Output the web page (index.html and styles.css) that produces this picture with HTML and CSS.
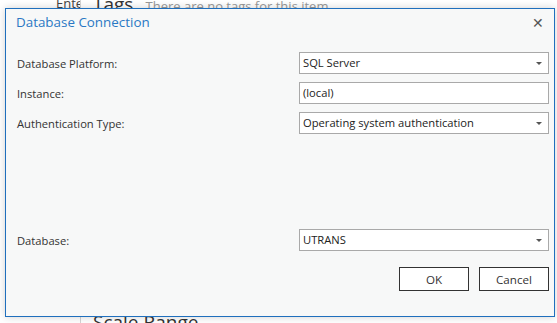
FILE: index.html
```html
<!DOCTYPE html>
<html lang="en">
<head>
    <meta charset="UTF-8">
    <title>Database Connection</title>
    <link rel="stylesheet" href="styles.css">
</head>
<body>
    <div class="page">
        <div class="side">
            <div class="side-label">Enter</div>
        </div>
        <div class="content">
            <div class="section">
                <span class="section-title">Tags</span>
                <span class="section-note">There are no tags for this item</span>
            </div>
            <div class="section section-bottom">
                <span class="section-title">Scale Range</span>
            </div>
        </div>
    </div>

    <div class="dialog">
        <div class="dialog-header">
            <span class="dialog-title">Database Connection</span>
            <span class="dialog-close">&#x2715;</span>
        </div>

        <div class="form-row">
            <label>Database Platform:</label>
            <div class="field select">SQL Server</div>
        </div>
        <div class="form-row">
            <label>Instance:</label>
            <div class="field">(local)</div>
        </div>
        <div class="form-row">
            <label>Authentication Type:</label>
            <div class="field select">Operating system authentication</div>
        </div>

        <div class="form-row form-row-db">
            <label>Database:</label>
            <div class="field select">UTRANS</div>
        </div>

        <div class="dialog-buttons">
            <button>OK</button>
            <button>Cancel</button>
        </div>
    </div>
</body>
</html>
```

FILE: styles.css
```css
body {
    margin: 0;
    background-color: #ffffff;
    font-family: "Open Sans", "Noto Sans", sans-serif;
    color: #333;
    overflow: hidden;
}

.page {
    display: flex;
    height: 323px;
}

.side {
    width: 80px;
    border-right: 1px solid #d4d4d4;
    overflow: hidden;
}

.side-label {
    margin: -6px 0 0 56px;
    font-size: 13px;
    color: #444;
}

.content {
    flex: 1;
    display: flex;
    flex-direction: column;
    justify-content: space-between;
    padding-left: 12px;
}

.section {
    margin-top: -9px;
}

.section-bottom {
    margin-bottom: -12px;
}

.section-title {
    font-size: 19px;
    color: #333;
}

.section-note {
    font-size: 13px;
    color: #999;
    margin-left: 8px;
}

.dialog {
    position: absolute;
    left: 5px;
    top: 8px;
    width: 548px;
    height: 307px;
    background-color: #f7f8f8;
    border: 1px solid #1f6fbd;
    box-shadow: 0 0 8px rgba(0, 0, 0, 0.18);
}

.dialog-header {
    display: flex;
    justify-content: space-between;
    align-items: center;
    height: 26px;
    padding: 0 10px 0 10px;
}

.dialog-title {
    font-size: 13.4px;
    color: #2a78c4;
}

.dialog-close {
    font-size: 14px;
    color: #555;
}

.form-row {
    display: flex;
    align-items: center;
    justify-content: space-between;
    margin-left: 11px;
    margin-right: 5px;
    margin-top: 8px;
    height: 22px;
}

.form-row:nth-of-type(2) {
    margin-top: 17px;
}

.form-row-db {
    margin-top: 95px;
}

label {
    font-size: 11.2px;
    color: #333;
}

.field {
    width: 245px;
    height: 20px;
    line-height: 20px;
    padding-left: 3px;
    border: 1px solid #a9a9a9;
    background-color: #fff;
    font-size: 11.2px;
    color: #222;
    position: relative;
}

.select::after {
    content: "";
    position: absolute;
    right: 6px;
    top: 9px;
    border-left: 3px solid transparent;
    border-right: 3px solid transparent;
    border-top: 3px solid #555;
}

.dialog-buttons {
    display: flex;
    justify-content: flex-end;
    gap: 10px;
    margin: 16px 5px 0 0;
}

button {
    width: 70px;
    height: 24px;
    background-color: #fff;
    border: 1px solid #333;
    font-family: inherit;
    font-size: 11.6px;
    color: #333;
    padding: 0;
}
```
